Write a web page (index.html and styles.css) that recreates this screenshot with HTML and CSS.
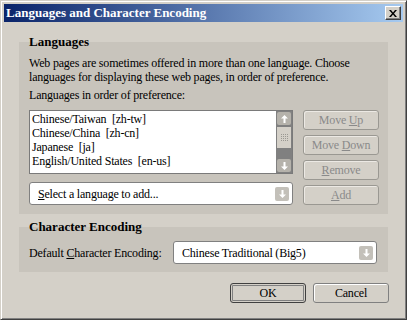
FILE: index.html
```html
<!DOCTYPE html>
<html lang="en">
<head>
    <meta charset="UTF-8">
    <title>Languages and Character Encoding</title>
    <link rel="stylesheet" href="styles.css">
</head>
<body>
    <div class="window">
        <div class="titlebar">
            <span class="title">Languages and Character Encoding</span>
            <button class="close-btn">
                <svg width="8" height="7" viewBox="0 0 8 7"><path d="M0 0h2l2 2.5L6 0h2L5 3.5 8 7H6L4 4.5 2 7H0l3-3.5z" fill="#000"/></svg>
            </button>
        </div>

        <div class="group">
            <div class="caption">Languages</div>
            <p class="intro">Web pages are sometimes offered in more than one language. Choose languages for displaying these web pages, in order of preference.</p>
            <div class="label">Languages in order of preference:</div>

            <div class="lang-grid">
                <div class="left-col">
                    <div class="listbox">
                        <div class="items">
                            <div class="item">Chinese/Taiwan &nbsp;[zh-tw]</div>
                            <div class="item">Chinese/China &nbsp;[zh-cn]</div>
                            <div class="item">Japanese &nbsp;[ja]</div>
                            <div class="item">English/United States &nbsp;[en-us]</div>
                        </div>
                        <div class="scrollbar">
                            <div class="sb-btn">
                                <svg width="7" height="8" viewBox="0 0 7 8"><path d="M3.5 0L7 3.5H4.5V8h-2V3.5H0z" fill="#fff"/></svg>
                            </div>
                            <div class="sb-thumb">
                                <svg width="7" height="7" viewBox="0 0 7 7">
                                    <defs><pattern id="dots" width="2" height="2" patternUnits="userSpaceOnUse"><rect width="1" height="1" fill="#9a9892"/></pattern></defs>
                                    <rect width="7" height="7" fill="url(#dots)"/>
                                </svg>
                            </div>
                            <div class="sb-track"></div>
                            <div class="sb-btn">
                                <svg width="7" height="8" viewBox="0 0 7 8"><path d="M3.5 8L7 4.5H4.5V0h-2v4.5H0z" fill="#fff"/></svg>
                            </div>
                        </div>
                    </div>

                    <div class="select">
                        <span><u>S</u>elect a language to add...</span>
                        <span class="drop-btn">
                            <svg width="7" height="8" viewBox="0 0 7 8"><path d="M3.5 8L7 4.5H4.5V0h-2v4.5H0z" fill="#fff"/></svg>
                        </span>
                    </div>
                </div>

                <div class="side-buttons">
                    <button class="btn" disabled>Move <u>U</u>p</button>
                    <button class="btn" disabled>Move <u>D</u>own</button>
                    <button class="btn" disabled><u>R</u>emove</button>
                    <button class="btn" disabled><u>A</u>dd</button>
                </div>
            </div>
        </div>

        <div class="group group-enc">
            <div class="caption">Character Encoding</div>
            <div class="enc-row">
                <span>Default <u>C</u>haracter Encoding:</span>
                <div class="select select-enc">
                    <span>Chinese Traditional (Big5)</span>
                    <span class="drop-btn">
                        <svg width="7" height="8" viewBox="0 0 7 8"><path d="M3.5 8L7 4.5H4.5V0h-2v4.5H0z" fill="#fff"/></svg>
                    </span>
                </div>
            </div>
        </div>

        <div class="footer">
            <button class="btn btn-default">OK</button>
            <button class="btn">Cancel</button>
        </div>
    </div>
</body>
</html>
```

FILE: styles.css
```css
html, body {
    margin: 0;
    padding: 0;
}

body {
    font-family: "Liberation Serif", serif;
    font-size: 12px;
    letter-spacing: -0.2px;
    color: #000;
    background: #d4d0c8;
}

.window {
    box-sizing: border-box;
    width: 407px;
    height: 320px;
    padding: 3px;
    background: #d4d0c8;
    border: 1px solid;
    border-color: #d4d0c8 #404040 #404040 #d4d0c8;
    box-shadow: inset 1px 1px #fff, inset -1px -1px #808080;
}

.titlebar {
    height: 18px;
    display: flex;
    align-items: center;
    justify-content: space-between;
    padding: 0 2px;
    background: linear-gradient(to right, #0a246a, #a6caf0);
}

.title {
    color: #fff;
    font-weight: bold;
    font-size: 13px;
    letter-spacing: 0;
}

.close-btn {
    box-sizing: border-box;
    width: 16px;
    height: 14px;
    padding: 0;
    display: flex;
    align-items: center;
    justify-content: center;
    background: #d4d0c8;
    border: 1px solid;
    border-color: #fff #404040 #404040 #fff;
    box-shadow: inset -1px -1px #808080;
}

.group {
    margin: 12px 15px 0;
    padding: 0 9px 9px 10px;
    line-height: 14px;
    background: linear-gradient(transparent 8px, #c8c4bc 8px);
}

.caption {
    font-weight: bold;
    font-size: 13px;
    letter-spacing: 0;
    line-height: 16px;
}

.intro {
    margin: 6px 0 0;
    width: 345px;
}

.label {
    margin-top: 4px;
}

.lang-grid {
    display: flex;
    gap: 10px;
    margin-top: 8px;
}

.left-col {
    width: 264px;
    display: flex;
    flex-direction: column;
    gap: 8px;
}

.listbox {
    box-sizing: border-box;
    height: 64px;
    display: flex;
    background: #fff;
    border: 1px solid #7a7a7a;
}

.items {
    flex: 1;
    padding: 1px 0 0 2px;
}

.item {
    height: 14px;
    line-height: 14px;
    white-space: nowrap;
}

.scrollbar {
    box-sizing: border-box;
    width: 16px;
    display: flex;
    flex-direction: column;
    padding: 1px 0;
    background: #808080;
}

.sb-btn {
    height: 13px;
    margin: 0 1px;
    display: flex;
    align-items: center;
    justify-content: center;
    background: #b5b2ab;
    border-radius: 2px;
}

.sb-thumb {
    height: 21px;
    margin: 2px 1px 0;
    display: flex;
    align-items: center;
    justify-content: center;
    background: #d4d0c8;
}

.sb-track {
    flex: 1;
}

.select {
    box-sizing: border-box;
    height: 23px;
    display: flex;
    align-items: center;
    justify-content: space-between;
    padding: 0 3px 0 8px;
    background: #fff;
    border: 1px solid #808080;
    border-radius: 3px;
}

.drop-btn {
    width: 14px;
    height: 14px;
    display: flex;
    align-items: center;
    justify-content: center;
    background: #c3c0b9;
    border-radius: 2px;
}

.side-buttons {
    width: 76px;
    display: flex;
    flex-direction: column;
    gap: 5px;
}

.btn {
    box-sizing: border-box;
    width: 76px;
    height: 20px;
    padding: 0;
    font-family: inherit;
    font-size: 12px;
    letter-spacing: inherit;
    color: #000;
    background: #d4d0c8;
    border: 1px solid #808080;
    border-radius: 3px;
    box-shadow: inset 1px 1px #fff;
}

.btn:disabled {
    color: #8a8a8a;
    border-color: #9a9892;
    box-shadow: inset 1px 1px #ece9e4;
}

.btn-default {
    border-color: #404040;
    box-shadow: inset 0 0 0 1px #d4d0c8, inset 0 0 0 2px #808080;
}

.group-enc {
    margin-top: 5px;
    padding: 0 11px 8px 10px;
}

.enc-row {
    display: flex;
    align-items: center;
    justify-content: space-between;
    margin-top: 6px;
}

.select-enc {
    width: 204px;
}

.footer {
    display: flex;
    justify-content: flex-end;
    gap: 7px;
    margin: 11px 14px 0 0;
}
```
